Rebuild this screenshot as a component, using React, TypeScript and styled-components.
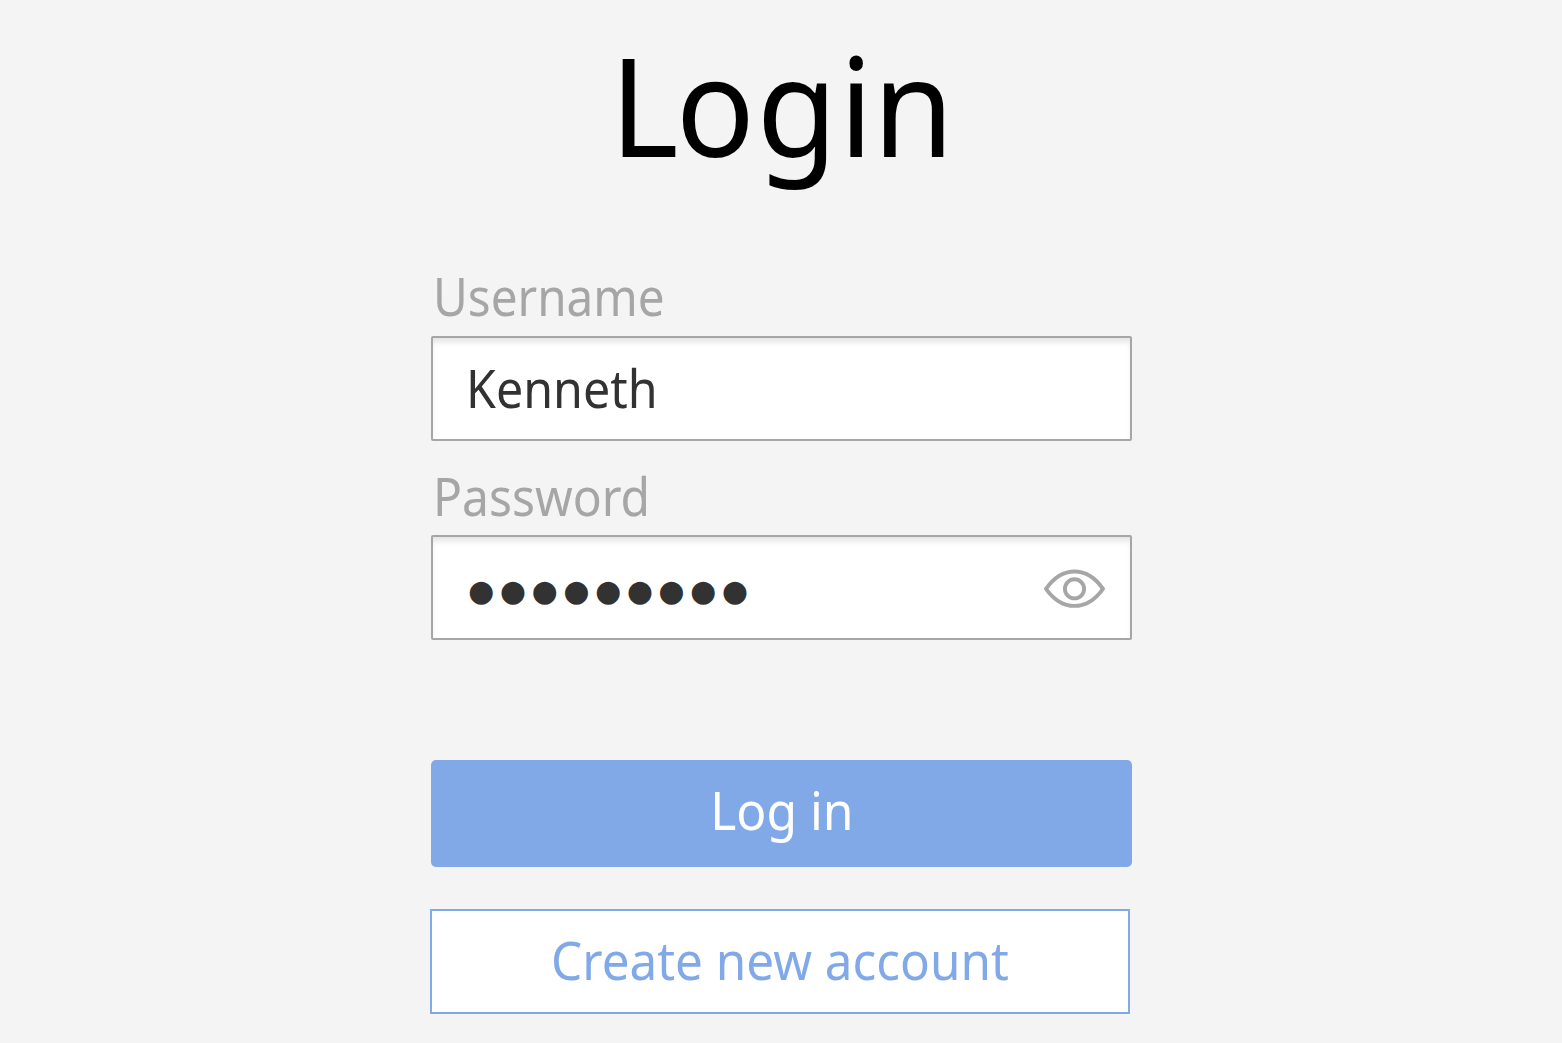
import React from "react";
import styled, { createGlobalStyle } from "styled-components";

const GlobalStyle = createGlobalStyle`
  * { box-sizing: border-box; }
  body {
    margin: 0;
    background: #f4f4f4;
    font-family: "Noto Sans", "Open Sans", sans-serif;
  }
`;

const Page = styled.main`
  display: flex;
  flex-direction: column;
  align-items: center;
  width: 1562px;
  height: 1043px;
  overflow: hidden;
  background: #f4f4f4;
`;

const Form = styled.form`
  display: flex;
  flex-direction: column;
  width: 701px;
  margin: 0 0 0 1px;
`;

const Stretch = styled.span<{ $scale: number; $origin?: string }>`
  display: inline-block;
  white-space: pre;
  transform: scaleX(${(p) => p.$scale});
  transform-origin: ${(p) => p.$origin ?? "left"} center;
`;

const Title = styled.h1`
  display: flex;
  justify-content: center;
  margin: 0;
  padding-top: 9px;
  height: 262px;
  font-size: 137px;
  font-weight: 400;
  line-height: 190px;
  color: #000;
`;

const Tracked = styled.span<{ $by: number }>`
  letter-spacing: ${(p) => p.$by}px;
`;

const Field = styled.div`
  display: flex;
  flex-direction: column;
  height: 199px;
`;

const Label = styled.label<{ $line: number }>`
  height: 74px;
  padding-left: 2px;
  font-size: 52px;
  line-height: ${(p) => p.$line}px;
  color: #a6a6a6;
`;

const InputBox = styled.div`
  display: flex;
  align-items: center;
  justify-content: space-between;
  height: 105px;
  padding: 0 25px 0 33px;
  border: 2px solid #a6a6a6;
  border-radius: 2px;
  background: #fff;
  box-shadow: inset 0 6px 6px -2px #e4e4e4;
  color: #323232;
`;

const Value = styled.span`
  padding-bottom: 2px;
  font-size: 52px;
  line-height: 99px;
`;

const Dots = styled.span`
  padding: 6px 0 0 2px;
  font-family: "DejaVu Sans", sans-serif;
  font-size: 30px;
  line-height: 95px;
  letter-spacing: 5.55px;
`;

const Button = styled.button<{ $outlined?: boolean }>`
  display: flex;
  align-items: center;
  justify-content: center;
  width: ${(p) => (p.$outlined ? "700px" : "701px")};
  height: ${(p) => (p.$outlined ? "105px" : "107px")};
  margin: ${(p) => (p.$outlined ? "42px 0 0 -1px" : "100px 0 0")};
  padding: ${(p) => (p.$outlined ? "0 0 3px" : "0 0 7px")};
  border: ${(p) => (p.$outlined ? "2px solid #81a9e8" : "0")};
  border-radius: ${(p) => (p.$outlined ? "0" : "5px")};
  background: ${(p) => (p.$outlined ? "#fff" : "#81a9e8")};
  color: ${(p) => (p.$outlined ? "#81a9e8" : "#fff")};
  font-family: inherit;
  font-size: 52px;
  line-height: 70px;
`;

const EyeIcon = styled.svg`
  display: block;
  margin-top: 2px;
`;

const Eye = () => (
  <EyeIcon width="61" height="40" viewBox="0 0 61 40" fill="none" stroke="#a6a6a6" strokeWidth="3.9" strokeLinejoin="round">
    <path d="M2 19.800C9.300 9.500 18 2.500 30.500 2.500S51.700 9.500 59 19.800C51.700 30 43 36.900 30.500 36.900S9.300 30 2 19.800Z" />
    <circle cx="30.500" cy="19.800" r="9.600" />
  </EyeIcon>
);

export default function App() {
  return (
    <>
      <GlobalStyle />
      <Page>
        <Form>
          <Title>
            <Stretch $scale={0.955} $origin="center">
              <Tracked $by={-3}>L</Tracked><Tracked $by={2}>og</Tracked>in
            </Stretch>
          </Title>
          <Field>
            <Label $line={68}><Stretch $scale={0.916}>Username</Stretch></Label>
            <InputBox><Value><Stretch $scale={0.93}>Kenneth</Stretch></Value></InputBox>
          </Field>
          <Field>
            <Label $line={70}><Stretch $scale={0.923}>Password</Stretch></Label>
            <InputBox><Dots>●●●●●●●●●</Dots><Eye /></InputBox>
          </Field>
          <Button type="button"><Stretch $scale={0.957} $origin="center">Log in</Stretch></Button>
          <Button type="button" $outlined><Stretch $scale={0.95} $origin="center">Create new account</Stretch></Button>
        </Form>
      </Page>
    </>
  );
}
